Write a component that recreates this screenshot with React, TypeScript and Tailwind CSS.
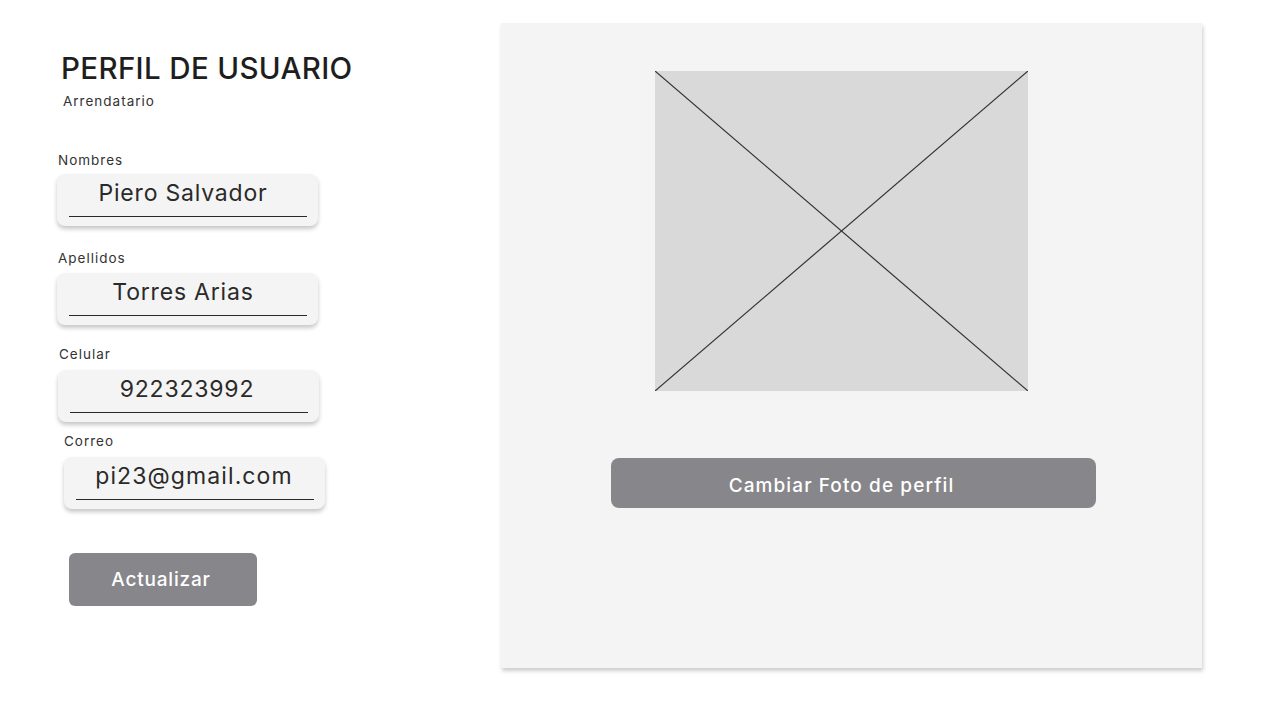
import React from 'react';

type Field = {
  label: string;
  value: string;
  wrap: string;
  labelCls: string;
  boxCls: string;
  textCls: string;
};

// small offsets follow the mockup, which is not perfectly aligned
const fields: Field[] = [
  { label: 'Nombres', value: 'Piero Salvador', wrap: 'mt-[43px]', labelCls: 'ml-[1px]', boxCls: 'mt-[6px] ml-0', textCls: 'pr-[10px]' },
  { label: 'Apellidos', value: 'Torres Arias', wrap: 'mt-[24px]', labelCls: 'ml-[1px]', boxCls: 'mt-[7px] ml-0', textCls: 'pr-[10px]' },
  { label: 'Celular', value: '922323992', wrap: 'mt-[21px]', labelCls: 'ml-[2px]', boxCls: 'mt-[8px] ml-[1px]', textCls: 'pr-[4px] tracking-[0.2px]' },
  { label: 'Correo', value: 'pi23@gmail.com', wrap: 'mt-[11px]', labelCls: 'ml-[7px]', boxCls: 'mt-[8px] ml-[7px]', textCls: 'pr-[2px] tracking-[1.1px]' },
];

const App: React.FC = () => {
  return (
    <div className="w-[1280px] h-[716px] bg-white flex font-['Inter',sans-serif] text-[#222]">
      <div className="w-[501px] shrink-0 pl-[57px] pt-[50px] flex flex-col items-start">
        <h1 className="ml-[4px] text-[29.5px] leading-[36px] font-medium tracking-[0.35px] text-[#1e1e1e]">
          PERFIL DE USUARIO
        </h1>
        <p className="mt-[7px] ml-[6px] text-[13.5px] leading-[16px] tracking-[1px] text-[#333]">Arrendatario</p>

        {fields.map((f) => (
          <div key={f.label} className={f.wrap}>
            <label className={`block text-[13.5px] leading-[16px] tracking-[1px] text-[#333] ${f.labelCls}`}>
              {f.label}
            </label>
            <div
              className={`w-[261px] h-[52px] rounded-[8px] bg-[#f4f4f4] shadow-[0_3px_4px_rgba(0,0,0,0.22)] pl-[12px] pr-[11px] ${f.boxCls}`}
            >
              <div className="h-[43px] pt-[5px] border-b border-[#2a2a2a]">
                <div className={`text-center text-[23px] leading-[28px] tracking-[0.8px] text-[#2a2a2a] ${f.textCls}`}>
                  {f.value}
                </div>
              </div>
            </div>
          </div>
        ))}

        <button className="mt-[44px] ml-[12px] w-[188px] h-[53px] rounded-[6px] bg-[#87868a] pr-[4px] text-white text-[19px] leading-[23px] tracking-[0.8px] font-medium">
          Actualizar
        </button>
      </div>

      <div className="mt-[23px] w-[701px] h-[645px] bg-[#f4f4f4] shadow-[1px_3px_4px_rgba(0,0,0,0.2)] flex flex-col items-start">
        <div className="mt-[48px] ml-[154px] w-[373px] h-[320px] bg-[#d9d9d9]">
          <svg width="373" height="320" viewBox="0 0 373 320" className="block">
            <line x1="0" y1="0" x2="373" y2="320" stroke="#333" strokeWidth="1.2" />
            <line x1="373" y1="0" x2="0" y2="320" stroke="#333" strokeWidth="1.2" />
          </svg>
        </div>
        <button className="mt-[67px] ml-[110px] w-[485px] h-[50px] rounded-[8px] bg-[#87868a] pt-[4px] pr-[24px] text-white text-[19px] leading-[23px] tracking-[1.1px] font-medium">
          Cambiar Foto de perfil
        </button>
      </div>
    </div>
  );
};

export default App;
